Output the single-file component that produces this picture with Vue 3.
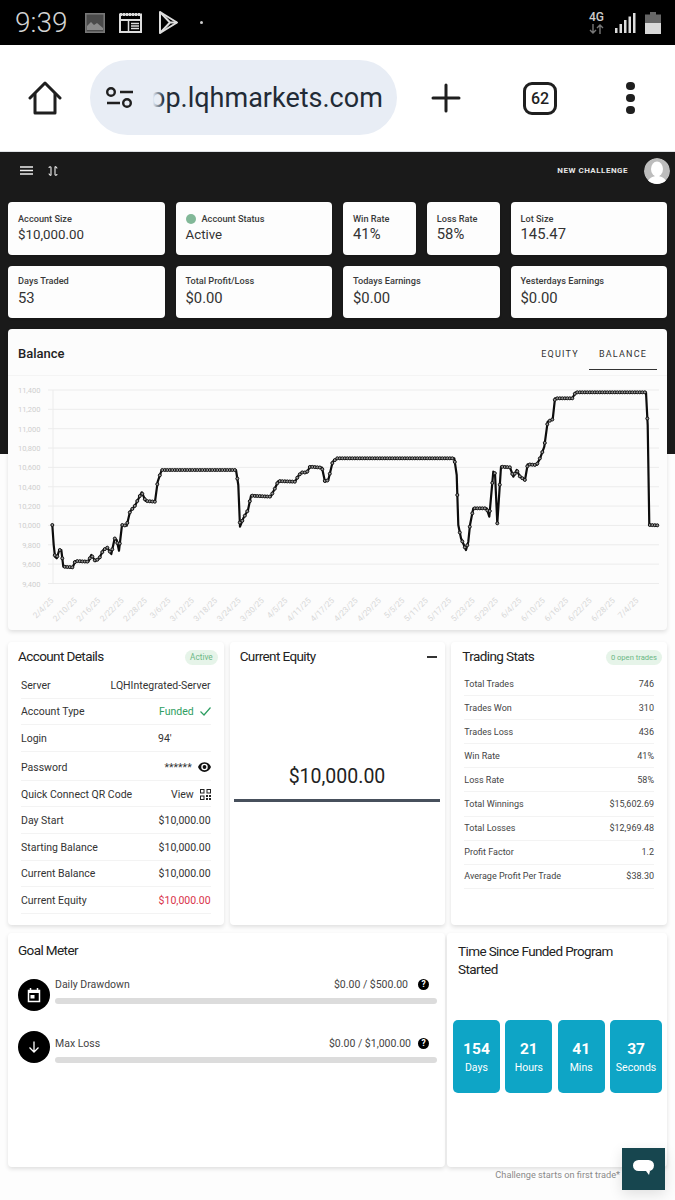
<script setup>
const tilesTop = [
  { label: 'Account Size', value: '$10,000.00', span: 2, small: true },
  { label: 'Account Status', value: 'Active', span: 2, dot: true, small: true },
  { label: 'Win Rate', value: '41%', span: 1 },
  { label: 'Loss Rate', value: '58%', span: 1 },
  { label: 'Lot Size', value: '145.47', span: 2 },
  { label: 'Days Traded', value: '53', span: 2 },
  { label: 'Total Profit/Loss', value: '$0.00', span: 2 },
  { label: 'Todays Earnings', value: '$0.00', span: 2 },
  { label: 'Yesterdays Earnings', value: '$0.00', span: 2 },
]

const yLabels = ['11,400', '11,200', '11,000', '10,800', '10,600', '10,400', '10,200', '10,000', '9,800', '9,600', '9,400']
const gridY = (i) => 14 + i * 19.35

const dates = ['2/4/25','2/10/25','2/16/25','2/22/25','2/28/25','3/6/25','3/12/25','3/18/25','3/24/25','3/30/25','4/5/25','4/11/25','4/17/25','4/23/25','4/29/25','5/5/25','5/11/25','5/17/25','5/23/25','5/29/25','6/4/25','6/10/25','6/16/25','6/22/25','6/28/25','7/4/25']

// traced from the reference, in 3x crop units
const left = [[157,450],[161,510],[165,545],[170,550],[178,525],[184,525],[190,575],[218,577],[226,558],[265,560],[274,540],[286,558],[298,550],[310,525],[322,518],[334,537],[344,490],[350,495],[357,527],[366,450],[380,452],[390,410],[405,392],[425,352],[437,378],[465,380],[473,320],[485,285],[708,285],[715,330],[720,455],[730,430],[744,405],[753,362],[812,365],[825,340],[835,318],[885,320],[895,303],[905,292],[920,293],[930,275],[966,278],[975,320],[985,315],[998,260],[1012,250]]
const right = [[358,250],[365,300],[370,450],[378,490],[393,525],[400,500],[405,450],[415,400],[455,400],[463,425],[475,290],[480,295],[487,445],[498,275],[525,277],[535,305],[545,285],[555,305],[570,315],[578,268],[605,270],[617,245],[628,215],[638,140],[653,133],[660,70],[712,70],[722,52],[933,52],[938,150],[943,450],[970,451]]
const pts = [...left, ...right.map(([x, y]) => [x + 1005, y])].map(([x, y]) => [x / 3, y / 3 + 375 - 376])

const line = pts.map((p) => p[0].toFixed(1) + ',' + p[1].toFixed(1)).join(' ')

const markers = []
for (let x = pts[0][0]; x <= pts[pts.length - 1][0]; x += 2.5) {
  let k = 0
  while (k < pts.length - 2 && pts[k + 1][0] < x) k++
  const [a, b] = [pts[k], pts[k + 1]]
  const t = b[0] === a[0] ? 0 : (x - a[0]) / (b[0] - a[0])
  markers.push({ x: +x.toFixed(1), y: +(a[1] + (b[1] - a[1]) * t).toFixed(1) })
}

const details = [
  { k: 'Server', v: 'LQHIntegrated-Server' },
  { k: 'Account Type', v: 'Funded', cls: 'green', icon: 'check' },
  { k: 'Login', v: '94\u2032', cls: 'login' },
  { k: 'Password', v: '******', icon: 'eye', tall: true },
  { k: 'Quick Connect QR Code', v: 'View', icon: 'qr' },
  { k: 'Day Start', v: '$10,000.00' },
  { k: 'Starting Balance', v: '$10,000.00' },
  { k: 'Current Balance', v: '$10,000.00' },
  { k: 'Current Equity', v: '$10,000.00', cls: 'red' },
]

const stats = [
  ['Total Trades', '746'],
  ['Trades Won', '310'],
  ['Trades Loss', '436'],
  ['Win Rate', '41%'],
  ['Loss Rate', '58%'],
  ['Total Winnings', '$15,602.69'],
  ['Total Losses', '$12,969.48'],
  ['Profit Factor', '1.2'],
  ['Average Profit Per Trade', '$38.30'],
]

const timer = [
  ['154', 'Days'],
  ['21', 'Hours'],
  ['41', 'Mins'],
  ['37', 'Seconds'],
]
</script>

<template>
  <div class="screen">
    <header class="status">
      <span class="time">9:39</span>
      <svg class="st1" width="20" height="20" viewBox="0 0 20 20"><rect x="0.800" y="0.800" width="18.400" height="18.400" fill="#4a4a4a" stroke="#777" stroke-width="1.600"/><path d="M2 17v-4l4-4 3 3 3-2 6 5v2z" fill="#8a8a8a"/></svg>
      <svg class="st2" width="23" height="21" viewBox="0 0 23 21" fill="none" stroke="#ddd"><rect x="1" y="2.500" width="21" height="17.500" stroke-width="2"/><path d="M1 2.500h21" stroke-width="3" stroke-dasharray="2 1"/><path d="M2 8h19" stroke-width="2"/><path d="M9.500 8v11" stroke-width="1.500"/><path d="M12 11.500h8M12 14h8M12 16.500h8" stroke-width="1.300"/></svg>
      <svg class="st3" width="21" height="25" viewBox="0 0 21 25" fill="none" stroke="#ddd" stroke-width="2" stroke-linejoin="round"><path d="M2 2l17 10.500L2 23z"/><path d="M2 2l10 10.500L2 23M12 12.500l7 0"/></svg>
      <span class="dot"></span>
      <span class="grow"></span>
      <span class="net">4G<svg width="15" height="10" viewBox="0 0 15 10" fill="none" stroke="#777" stroke-width="1.400"><path d="M4 0v9M1 6l3 3 3-3M11 10V1M8 4l3-3 3 3"/></svg></span>
      <svg class="bars" width="21" height="20" viewBox="0 0 21 20" fill="#ddd"><rect x="0" y="15" width="2.500" height="5"/><rect x="4.500" y="11" width="2.500" height="9"/><rect x="9" y="7" width="2.500" height="13"/><rect x="13.500" y="3.500" width="2.500" height="16.500"/><rect x="18" y="0" width="2.500" height="20"/></svg>
      <svg width="16" height="22" viewBox="0 0 16 22"><path d="M5 0h6v2.500h5V11H0V2.500h5z" fill="#666"/><rect y="11" width="16" height="11" fill="#d8d8d8"/></svg>
    </header>

    <nav class="browser">
      <svg width="34" height="34" viewBox="0 0 34 34" fill="none" stroke="#1f1f1f" stroke-width="3" stroke-linejoin="round" stroke-linecap="round"><path d="M2 17L17 2l15 15"/><path d="M7 13v19h20V13"/></svg>
      <div class="omni">
        <svg width="28" height="22" viewBox="0 0 28 22" fill="none" stroke="#1f1f1f" stroke-width="2.400"><circle cx="5" cy="5" r="3.800"/><path d="M14 5h13M1 16h13"/><circle cx="21" cy="16" r="3.800"/></svg>
        <div class="url"><span class="urltext">op.lqhmarkets.com</span><span class="fade"></span></div>
      </div>
      <svg class="plus" width="30" height="30" viewBox="0 0 30 30" stroke="#1f1f1f" stroke-width="3" stroke-linecap="round"><path d="M15 2v26M2 15h26"/></svg>
      <span class="tabs">62</span>
      <span class="kebab"><i></i><i></i><i></i></span>
    </nav>

    <main class="page">
      <div class="topbar">
        <svg width="13" height="9" viewBox="0 0 13 9" fill="none" stroke="#eee" stroke-width="1.600"><path d="M0 1h13M0 4.500h13M0 8h13"/></svg>
        <svg class="swap" width="10" height="10" viewBox="0 0 10 10" fill="none" stroke="#eee" stroke-width="1.100"><path d="M3 9.500V1.500C3 .5 1 .5 1 2M1 7.500c0 1.500 2 2 2 2M7 .5v8c0 1 2 1 2-.5M7 .5s2 .5 2 2"/></svg>
        <span class="grow"></span>
        <span class="newch">NEW CHALLENGE</span>
        <span class="avatar"><svg width="26" height="26" viewBox="0 0 26 26"><circle cx="13" cy="13" r="13" fill="#bdbdbd"/><ellipse cx="13" cy="11" rx="6" ry="7.500" fill="#fff"/><path d="M3 26c1-6 6-8 10-8s9 2 10 8z" fill="#fff"/></svg></span>
      </div>

      <section class="tiles">
        <div v-for="t in tilesTop" :key="t.label" class="tile" :class="t.span === 2 ? 'span2' : ''">
          <div class="tlabel"><span v-if="t.dot" class="gdot"></span>{{ t.label }}</div>
          <div class="tvalue" :class="t.small ? 'tsmall' : ''">{{ t.value }}</div>
        </div>
      </section>

      <section class="card chart">
        <div class="chead">
          <h2>Balance</h2>
          <div class="tabsrow">
            <span class="tab first">EQUITY</span>
            <span class="tab on">BALANCE</span>
          </div>
        </div>
        <svg class="plot" width="659" height="254" viewBox="0 0 659 254">
          <line v-for="(l, i) in yLabels" :key="l" x1="40" :x2="651" :y1="gridY(i)" :y2="gridY(i)" class="gl" />
          <line x1="45" y1="14" x2="45" y2="207.500" class="gl" />
          <text v-for="(l, i) in yLabels" :key="'t' + l" x="32.500" :y="gridY(i) + 3" class="yl" text-anchor="end">{{ l }}</text>
          <g transform="translate(-8 0)">
            <polyline :points="line" fill="none" stroke="#0d0d0d" stroke-width="2.200" stroke-linejoin="round" />
            <circle v-for="(m, i) in markers" :key="i" :cx="m.x" :cy="m.y" r="1.500" fill="#999" stroke="#111" stroke-width="1" />
          </g>
          <text v-for="(d, i) in dates" :key="d" class="xl" text-anchor="end" :transform="`translate(${46 + i * 23.4} 225) rotate(-45)`">{{ d }}</text>
        </svg>
      </section>

      <section class="three">
        <div class="card info">
          <div class="ihead"><h3 class="shift3">Account Details</h3><span class="pill">Active</span></div>
          <div v-for="d in details" :key="d.k" class="drow" :class="d.tall ? 'tall' : ''">
            <span>{{ d.k }}</span>
            <span class="dval" :class="d.cls">
              {{ d.v }}
              <svg v-if="d.icon === 'check'" width="11" height="9" viewBox="0 0 11 9" fill="none" stroke="#2e9e62" stroke-width="1.200"><path d="M.5 4.500L4 8l6.500-7.500"/></svg>
              <svg v-if="d.icon === 'eye'" width="13" height="10" viewBox="0 0 24 18" fill="#111"><path d="M12 0C6.500 0 2 3.500 0 9c2 5.500 6.500 9 12 9s10-3.500 12-9c-2-5.500-6.500-9-12-9zm0 15a6 6 0 1 1 0-12 6 6 0 0 1 0 12zm0-9.500a3.500 3.500 0 1 0 0 7 3.500 3.500 0 0 0 0-7z"/></svg>
              <svg v-if="d.icon === 'qr'" width="11" height="11" viewBox="0 0 11 11" fill="#222"><path d="M0 0h4.500v4.500H0zm1 1v2.500h2.500V1zM6.500 0H11v4.500H6.500zm1 1v2.500H10V1zM0 6.500h4.500V11H0zm1 1V10h2.500V7.500zM6 6h2v2H6zm3 0h2v2H9zM6 9h2v2H6zm3 0h2v2H9z"/></svg>
            </span>
          </div>
        </div>

        <div class="card equity">
          <div class="ihead"><h3>Current Equity</h3><span class="dash"></span></div>
          <div class="eqamount">$10,000.00</div>
          <div class="eqbar"></div>
        </div>

        <div class="card info stats">
          <div class="ihead"><h3>Trading Stats</h3><span class="pill pill2">0 open trades</span></div>
          <div v-for="s in stats" :key="s[0]" class="srow">
            <span>{{ s[0] }}</span><span>{{ s[1] }}</span>
          </div>
        </div>
      </section>

      <section class="two">
        <div class="card goal">
          <h3>Goal Meter</h3>
          <div class="meter">
            <span class="mico"><svg width="14" height="15" viewBox="0 0 14 15" fill="none"><path d="M1.500 2.500h11v11h-11z" stroke="#fff" stroke-width="1.500"/><path d="M1 2h12v3H1z" fill="#fff"/><path d="M3.500 0v2M10.500 0v2" stroke="#fff" stroke-width="1.500"/><rect x="3.500" y="7" width="4" height="3.500" fill="#fff"/></svg></span>
            <div class="mbody">
              <div class="mtop"><span>Daily Drawdown</span><span class="grow"></span><span class="mval">$0.00 / $500.00</span><span class="qm qm1">?</span></div>
              <div class="track"></div>
            </div>
          </div>
          <div class="meter">
            <span class="mico"><svg width="12" height="12" viewBox="0 0 12 12" fill="none" stroke="#fff" stroke-width="1.300"><path d="M6 .5v10.500M1.500 6.500L6 11l4.500-4.500"/></svg></span>
            <div class="mbody">
              <div class="mtop"><span>Max Loss</span><span class="grow"></span><span class="mval">$0.00 / $1,000.00</span><span class="qm">?</span></div>
              <div class="track"></div>
            </div>
          </div>
        </div>

        <div class="card since">
          <h3>Time Since Funded Program Started</h3>
          <div class="timer">
            <div v-for="t in timer" :key="t[1]" class="tbox">
              <b>{{ t[0] }}</b><span>{{ t[1] }}</span>
            </div>
          </div>
        </div>
      </section>

      <p class="foot">Challenge starts on first trade*</p>

      <button class="chat" aria-label="Chat">
        <svg width="22" height="18" viewBox="0 0 22 18"><rect width="21" height="11" rx="5.500" fill="#fff"/><path d="M13 11h4l-1 4z" fill="#fff"/></svg>
      </button>
    </main>
  </div>
</template>

<style>
html, body { margin: 0; background: #fff; }
</style>

<style scoped>
* { box-sizing: border-box; }
.screen { width: 675px; height: 1200px; overflow: hidden; font-family: Roboto, "Liberation Sans", sans-serif; color: #222; background: #fff; }
.grow { flex: 1; }

.status { height: 45px; background: #000; display: flex; align-items: center; padding: 0 14px 0 15px; }
.time { font-size: 28px; font-weight: 300; color: #d4d4d4; width: 55px; margin-right: 15px; }
.st1 { margin-right: 14px; }
.st2 { margin-right: 16px; }
.dot { width: 3px; height: 3px; border-radius: 50%; background: #ccc; margin-left: 21px; }
.net { display: flex; flex-direction: column; align-items: center; font-size: 12px; line-height: 12px; color: #ccc; margin-right: 10px; font-weight: 500; width: 17px; gap: 1px; }
.bars { margin-right: 9px; }

.browser { height: 107px; background: #fff; border-bottom: 1px solid #dfe3e6; display: flex; align-items: center; padding: 0 0 0 28px; }
.omni { width: 307px; height: 75px; margin-left: 28px; border-radius: 38px; background: #e8edf5; display: flex; align-items: center; padding-left: 16px; margin-top: -1px; }
.url { position: relative; margin-left: 16px; }
.urltext { font-size: 27px; color: #222b36; white-space: nowrap; }
.fade { position: absolute; left: 0; top: 0; bottom: 0; width: 14px; background: linear-gradient(90deg, #e8edf5 20%, rgba(232,237,245,0)); }
.plus { margin-left: 34px; }
.tabs { margin-left: 62px; width: 34px; height: 33px; border: 3.500px solid #1f1f1f; border-radius: 9px; font-size: 16px; font-weight: 500; display: flex; align-items: center; justify-content: center; color: #1f1f1f; }
.kebab { margin-left: 69px; display: flex; flex-direction: column; gap: 3.500px; }
.kebab i { width: 8.500px; height: 8.500px; border-radius: 50%; background: #1f1f1f; }

.page { position: relative; height: 1048px; padding: 0 8px; background: linear-gradient(#1a1a1a 302px, #fdfdfd 302px); }
.topbar { height: 37px; margin-bottom: 13px; display: flex; align-items: center; padding: 0 0 0 12px; margin-right: -3px; }
.swap { margin-left: 15px; }
.newch { font-size: 8px; font-weight: 700; letter-spacing: .5px; color: #e6e6e6; margin-right: 16px; }
.avatar { display: flex; border-radius: 50%; overflow: hidden; }

.tiles { display: grid; grid-template-columns: repeat(8, 1fr); grid-auto-rows: 52.500px; gap: 11px; }
.tile { background: #fdfdfd; border-radius: 4px; padding: 10px 10px; box-shadow: 0 1px 2px rgba(0,0,0,.2); }
.span2 { grid-column: span 2; }
.tlabel { font-size: 9.200px; font-weight: 500; color: #3a3a3a; line-height: 12px; display: flex; align-items: center; white-space: nowrap; padding-top: 1px; }
.tile:nth-child(n+6) .tlabel { padding-top: 0; margin-top: -1px; }
.tile:nth-child(n+6) .tvalue { margin-top: 3px; }
.gdot { width: 10px; height: 10px; border-radius: 50%; background: #82b898; margin-right: 6px; }
.tvalue { font-size: 14.800px; color: #333; line-height: 17px; margin-top: 1px; white-space: nowrap; }
.tsmall { font-size: 13.300px; }

.card { background: #fff; border-radius: 4px; box-shadow: 0 2px 4px rgba(0,0,0,.12); }
.chart { margin-top: 11px; height: 301px; background: #fcfcfc; }
.chead { height: 47px; display: flex; align-items: center; justify-content: space-between; padding: 0 10px; border-bottom: 1px solid #f4f4f4; }
.chead h2 { margin: 0; font-size: 13px; font-weight: 500; color: #222; padding-top: 3px; }
.tabsrow { display: flex; height: 41px; align-self: flex-start; }
.tab { width: 68px; display: flex; align-items: center; justify-content: center; font-size: 9px; letter-spacing: 1.200px; color: #333; padding-top: 9px; }
.tab.first { padding-left: 10px; }
.tab.on { border-bottom: 1.500px solid #333; }
.plot { display: block; }
.gl { stroke: #ececec; stroke-width: 1; }
.yl { font-size: 7.500px; fill: #cfcfcf; }
.xl { font-size: 8.200px; fill: #d8d8d8; }

.three { display: grid; grid-template-columns: repeat(3, 1fr); gap: 6px; margin-top: 12px; height: 283px; }
.info { padding: 0 13px 0 13px; }
.ihead { display: flex; align-items: center; justify-content: space-between; height: 30px; }
.ihead h3 { padding-bottom: 2px; }
.ihead h3, .goal h3, .since h3 { margin: 0; font-size: 13.500px; font-weight: 400; letter-spacing: -.6px; color: #222; }
.ihead .shift3 { margin-left: -3px; }
.pill { font-size: 8.200px; color: #6cb785; background: #e6f4e9; border-radius: 8px; padding: 2px 5px; line-height: 11px; margin-right: -7px; }
.pill2 { font-size: 7.600px; }
.drow { display: flex; justify-content: space-between; align-items: center; font-size: 10.500px; color: #333; border-bottom: 1px solid #f3f3f3; height: 26.600px; padding-top: 1px; }
.drow.tall { height: 29px; padding-top: 3px; }
.dval { display: flex; align-items: center; gap: 6px; white-space: nowrap; }
.green { color: #2e9e62; }
.red { color: #d9334a; }
.login { margin-right: 39px; }

.equity { padding: 0 5px 0 4px; }
.equity .ihead { padding: 0 3px 0 6px; }
.dash { width: 10px; height: 1.500px; background: #333; }
.eqamount { text-align: center; font-size: 19.500px; color: #222; margin-top: 93px; line-height: 24px; }
.eqbar { height: 3px; background: #47505c; margin-top: 10px; }

.stats { padding: 0 12px 0 11px; }
.srow { display: flex; justify-content: space-between; align-items: center; font-size: 9px; color: #444; height: 24.100px; border-bottom: 1px solid #f3f3f3; margin: 0 1px 0 2px; }

.two { display: grid; grid-template-columns: 437px 220px; gap: 2px; margin-top: 8px; height: 234px; }
.goal { padding: 9px 8px 0 10px; }
.goal h3 { line-height: 17px; margin-bottom: 20px; }
.meter { display: flex; gap: 5px; height: 51.500px; }
.mico { width: 32px; height: 32px; border-radius: 50%; background: #000; display: flex; align-items: center; justify-content: center; flex: none; }
.meter + .meter .mtop { margin-top: 8px; }
.mbody { flex: 1; margin-top: -3px; }
.mtop { display: flex; align-items: center; font-size: 10.500px; color: #444; height: 16px; }
.mval { font-size: 10.500px; }
.qm { width: 11px; height: 11px; border-radius: 50%; background: #000; color: #fff; font-size: 8.500px; font-weight: 700; line-height: 11px; text-align: center; margin-left: 7px; margin-right: 8px; }
.qm1 { margin-left: 10px; }
.track { height: 6px; border-radius: 3px; background: #dcdcdc; margin-top: 6px; }
.meter + .meter .track { margin-top: 5px; }

.since { padding: 9px 5px 0 6px; }
.since h3 { line-height: 18px; padding: 0 30px 0 5px; height: 36px; }
.timer { display: flex; gap: 5.500px; margin-top: 42px; }
.tbox { flex: 47 1 0; height: 73px; border-radius: 5px; background: #0ea5c6; color: #fff; display: flex; flex-direction: column; align-items: center; padding-top: 20px; }
.tbox:last-child { flex: 52 1 0; }
.tbox b { font-size: 15.500px; font-weight: 700; line-height: 18px; }
.tbox span { font-size: 10.500px; line-height: 13px; margin-top: 3px; white-space: nowrap; }

.foot { margin: 2px 0 0; text-align: right; font-size: 9.200px; color: #8a8a8a; padding-right: 47px; line-height: 12px; }
.chat { position: absolute; right: 10px; bottom: 10px; width: 43px; height: 42px; border: 0; padding: 0; background: #17464f; display: flex; align-items: center; justify-content: center; box-shadow: 0 4px 14px rgba(0,0,0,.12); }
</style>
